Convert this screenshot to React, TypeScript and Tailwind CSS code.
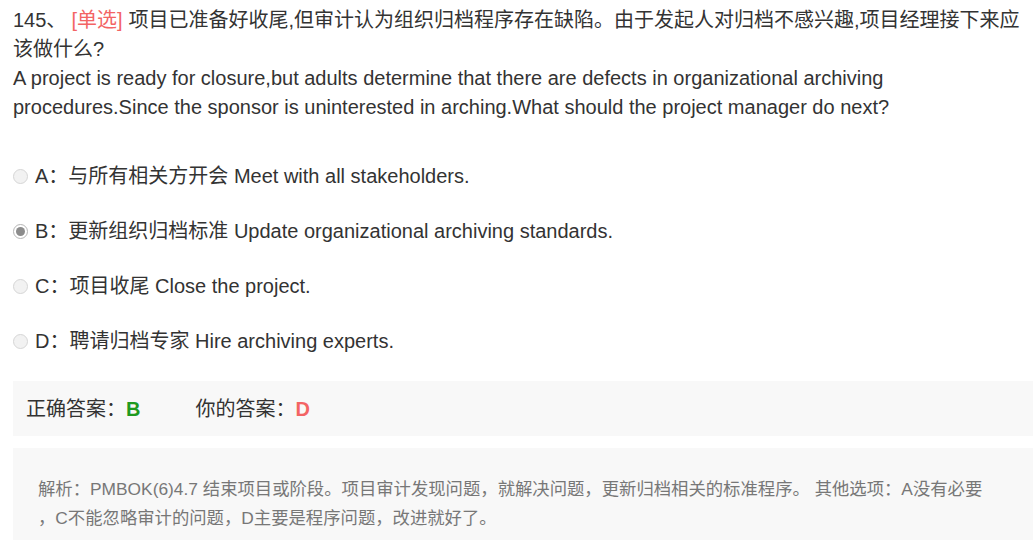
import React from "react";

const font = { fontFamily: '"Liberation Sans", Arial, "Noto Sans CJK SC", sans-serif' };

type Opt = { key: string; zh: string; en: string; checked?: boolean };

const options: Opt[] = [
  { key: "A", zh: "与所有相关方开会", en: "Meet with all stakeholders." },
  { key: "B", zh: "更新组织归档标准", en: "Update organizational archiving standards.", checked: true },
  { key: "C", zh: "项目收尾", en: "Close the project." },
  { key: "D", zh: "聘请归档专家", en: "Hire archiving experts." },
];

function Radio({ checked }: { checked?: boolean }) {
  return (
    <span
      className={
        "inline-flex w-[15px] h-[15px] rounded-full border items-center justify-center shrink-0 " +
        (checked ? "border-[#b5b5b5] bg-white" : "border-[#d6d6d6] bg-[#f2f2f2]")
      }
    >
      {checked && <span className="w-[9px] h-[9px] rounded-full bg-[#8c8c8c]" />}
    </span>
  );
}

export default function App() {
  return (
    <div className="w-[1033px] h-[540px] overflow-hidden bg-white text-[#333]" style={font}>
      <div className="pl-[13px] pt-[6px] text-[20px] leading-[29px] w-[1028px]">
        <div className="flex whitespace-nowrap">
          <span>145、</span>
          <span className="ml-[5px] text-[#f36464]">[单选]</span>
          <span className="ml-[6px]">项目已准备好收尾,但审计认为组织归档程序存在缺陷。由于发起人对归档不感兴趣,项目经理接下来应</span>
        </div>
        <div>该做什么?</div>
        <div>A project is ready for closure,but adults determine that there are defects in organizational archiving</div>
        <div>procedures.Since the sponsor is uninterested in arching.What should the project manager do next?</div>
      </div>

      <div className="pl-[13px] pt-[40px] flex flex-col gap-[26px] text-[20px] leading-[29px]">
        {options.map((o) => (
          <div key={o.key} className="flex items-center gap-[7px]">
            <Radio checked={o.checked} />
            <span>{o.key}：{o.zh} {o.en}</span>
          </div>
        ))}
      </div>

      <div className="ml-[13px] mt-[25px] h-[55px] bg-[#f8f8f8] flex items-center pl-[13px] text-[20px]">
        <span>正确答案：</span>
        <span className="font-bold text-[#1f9a1f]">B</span>
        <span className="ml-[55px]">你的答案：</span>
        <span className="font-bold text-[#f36464]">D</span>
      </div>

      <div className="ml-[13px] mt-[12px] h-[200px] bg-[#f8f8f8] pl-[25px] pt-[27px] text-[17.35px] leading-[29px] text-[#777]">
        <div>解析：PMBOK(6)4.7 结束项目或阶段。项目审计发现问题，就解决问题，更新归档相关的标准程序。 其他选项：A没有必要</div>
        <div>，C不能忽略审计的问题，D主要是程序问题，改进就好了。</div>
      </div>
    </div>
  );
}
